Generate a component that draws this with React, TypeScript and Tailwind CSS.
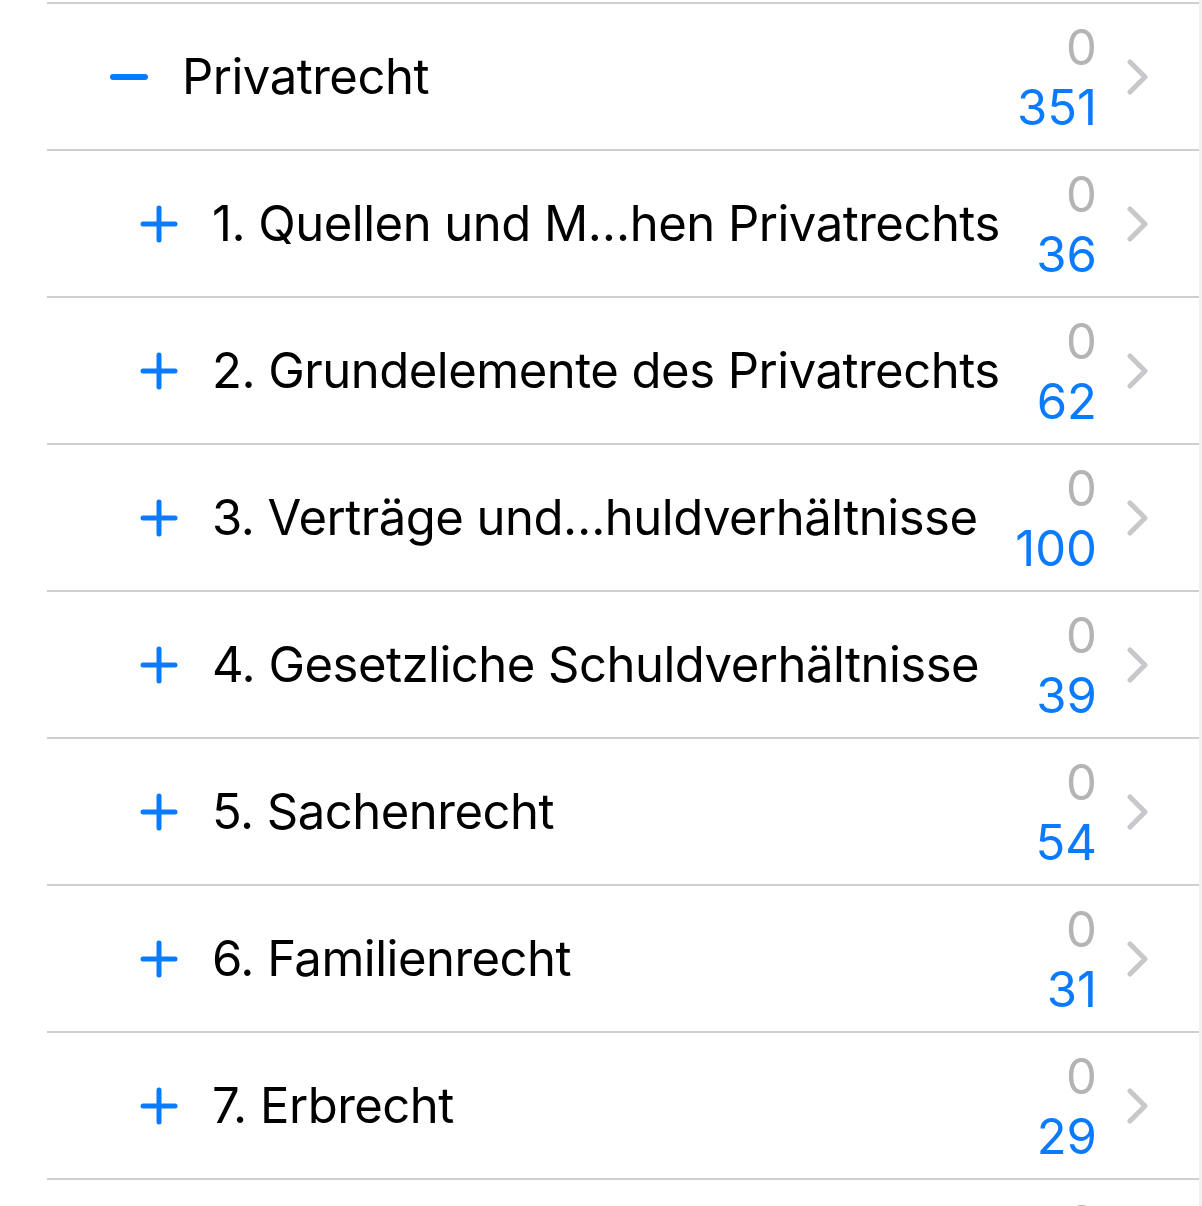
import React from 'react';

interface Row {
  title: string;
  done: number;
  total: number;
  open?: boolean;
  child?: boolean;
}

const rows: Row[] = [
  { title: 'Privatrecht', done: 0, total: 351, open: true },
  { title: '1. Quellen und M…hen Privatrechts', done: 0, total: 36, child: true },
  { title: '2. Grundelemente des Privatrechts', done: 0, total: 62, child: true },
  { title: '3. Verträge und…huldverhältnisse', done: 0, total: 100, child: true },
  { title: '4. Gesetzliche Schuldverhältnisse', done: 0, total: 39, child: true },
  { title: '5. Sachenrecht', done: 0, total: 54, child: true },
  { title: '6. Familienrecht', done: 0, total: 31, child: true },
  { title: '7. Erbrecht', done: 0, total: 29, child: true },
  { title: '8. Handelsrecht', done: 0, total: 40, child: true },
];

const Minus = () => (
  <svg width="38" height="38" viewBox="0 0 38 38">
    <line x1="3" y1="19" x2="35" y2="19" stroke="#0a7bff" strokeWidth="6" strokeLinecap="round" />
  </svg>
);

const Plus = () => (
  <svg width="38" height="38" viewBox="0 0 38 38">
    <line x1="3" y1="19" x2="35" y2="19" stroke="#0a7bff" strokeWidth="5" strokeLinecap="round" />
    <line x1="19" y1="3" x2="19" y2="35" stroke="#0a7bff" strokeWidth="5" strokeLinecap="round" />
  </svg>
);

const Chevron = () => (
  <svg width="22" height="36" viewBox="0 0 22 36">
    <polyline points="3,3 18,18 3,33" fill="none" stroke="#c7c7cc" strokeWidth="5" strokeLinecap="round" strokeLinejoin="round" />
  </svg>
);

export default function App() {
  return (
    <div
      className="flex w-[1202px] h-[1206px] overflow-hidden bg-white"
      style={{ fontFamily: 'Inter, Roboto, sans-serif' }}
    >
      <div className="w-[1199px] pl-[47px] pt-[2px]">
        <div className="border-t-2 border-[#cfced3]">
          {rows.map((r, i) => (
            <div key={i} className="flex items-center h-[147px] border-b-2 border-[#cfced3]">
              <div className={r.child ? 'ml-[93px] mr-[34px] flex' : 'ml-[63px] mr-[34px] flex'}>
                {r.open ? <Minus /> : <Plus />}
              </div>
              <div className="flex-1 text-[49px] text-black whitespace-nowrap tracking-[-0.5px]">{r.title}</div>
              <div className="flex flex-col items-end text-[49px] leading-[60px] mt-[3px]">
                <span className="text-[#b4b4b4]">{r.done}</span>
                <span className="text-[#0a7bff]">{r.total}</span>
              </div>
              <div className="ml-[30px] mr-[50px] flex">
                <Chevron />
              </div>
            </div>
          ))}
        </div>
      </div>
      <div className="flex-1 bg-[#efeff4]" />
    </div>
  );
}
